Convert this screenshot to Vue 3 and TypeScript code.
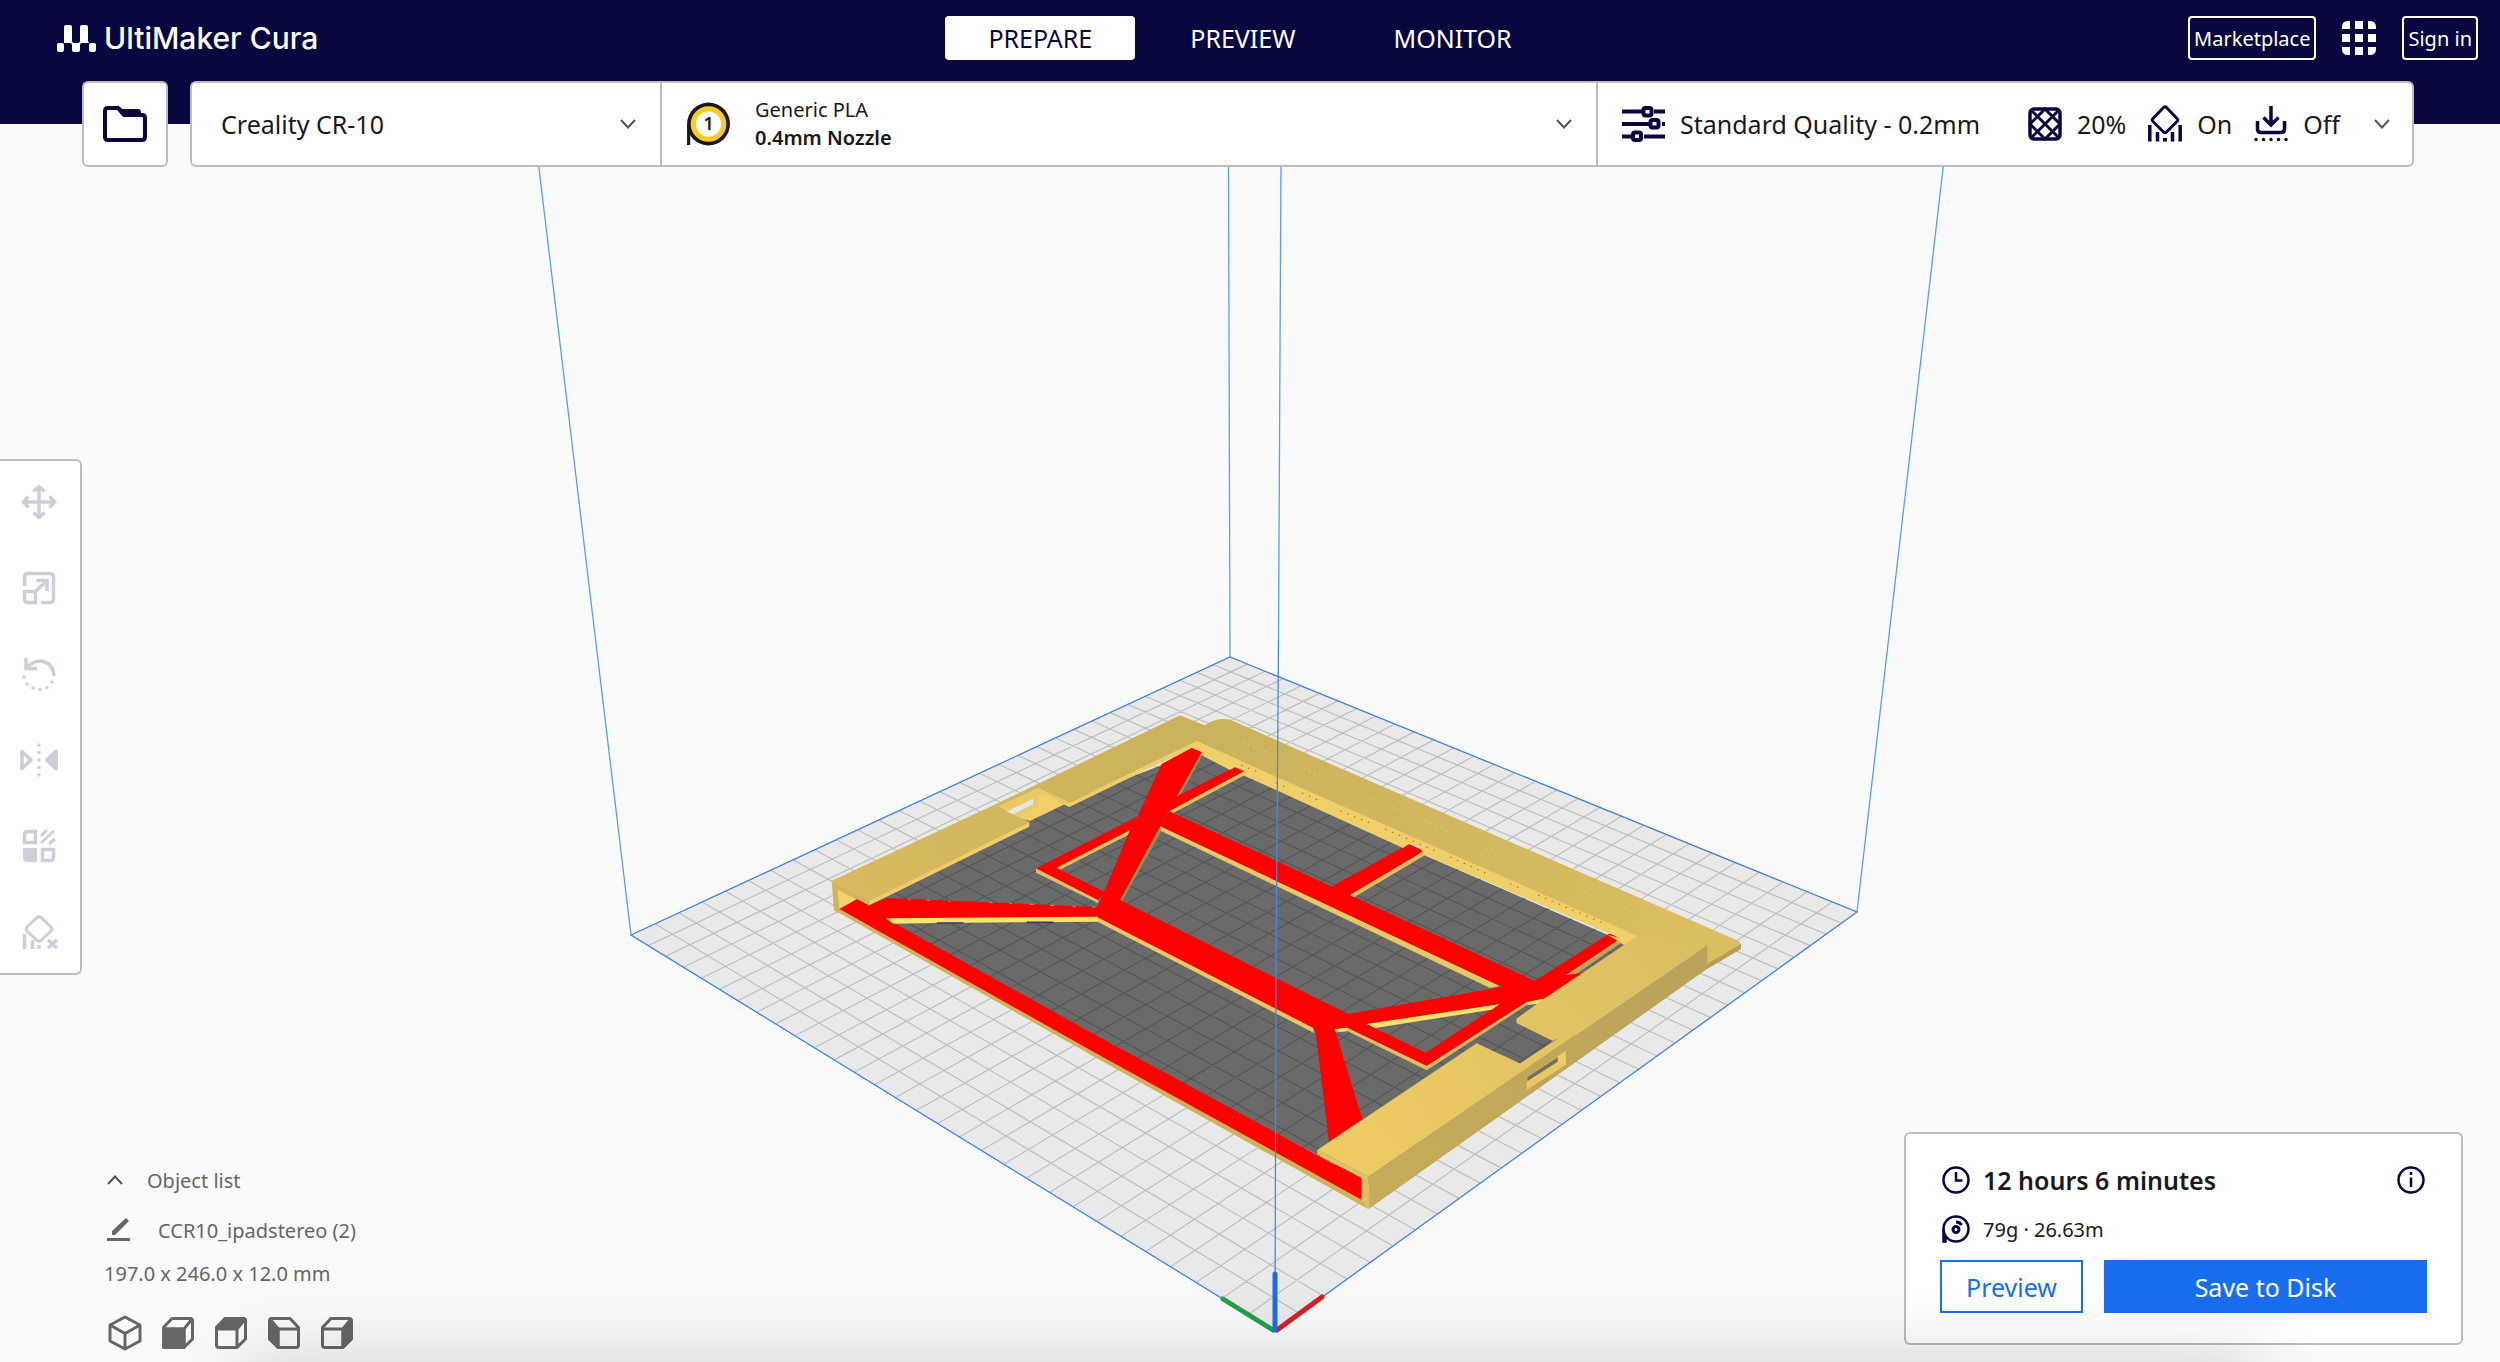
<script setup lang="ts">
type Point = [number, number]

const stages = ['PREPARE', 'PREVIEW', 'MONITOR']
const views = ['3D View', 'Front View', 'Top View', 'Left View', 'Right View']

// Corners of the build plate on the canvas: front, right, back, left.
const front: Point = [1275, 1331]
const right: Point = [1857, 912]
const back: Point = [1230, 657]
const left: Point = [631, 935]

// Perspective mapping from plate coordinates (0..1) to the canvas.
const dx1 = right[0] - back[0]
const dx2 = left[0] - back[0]
const dx3 = front[0] - right[0] + back[0] - left[0]
const dy1 = right[1] - back[1]
const dy2 = left[1] - back[1]
const dy3 = front[1] - right[1] + back[1] - left[1]
const det = dx1 * dy2 - dx2 * dy1
const g = (dx3 * dy2 - dx2 * dy3) / det
const h = (dx1 * dy3 - dx3 * dy1) / det

function project(u: number, v: number): string {
  const w = g * u + h * v + 1
  const x = ((right[0] - front[0] + g * right[0]) * u + (left[0] - front[0] + h * left[0]) * v + front[0]) / w
  const y = ((right[1] - front[1] + g * right[1]) * u + (left[1] - front[1] + h * left[1]) * v + front[1]) / w
  return `${x.toFixed(1)} ${y.toFixed(1)}`
}

function gridPath(count: number): string {
  let d = ''
  for (let i = 1; i < count; i++) {
    const t = i / count
    d += `M${project(t, 0)}L${project(t, 1)}M${project(0, t)}L${project(1, t)}`
  }
  return d
}

const grid = gridPath(30)
const plate = `M${front}L${right}L${back}L${left}Z`
</script>

<template>
  <div class="app">
    <svg class="scene" viewBox="0 0 2500 1362" preserveAspectRatio="xMidYMid slice" aria-hidden="true">
      <defs>
        <linearGradient id="backTop" x1="1180" y1="740" x2="1710" y2="960" gradientUnits="userSpaceOnUse">
          <stop offset="0" stop-color="#cbb15c" /><stop offset="1" stop-color="#dcbe62" />
        </linearGradient>
        <linearGradient id="rightTop" x1="1680" y1="930" x2="1360" y2="1170" gradientUnits="userSpaceOnUse">
          <stop offset="0" stop-color="#dcbe62" /><stop offset="1" stop-color="#edcb64" />
        </linearGradient>
        <linearGradient id="leftTop" x1="1180" y1="720" x2="850" y2="890" gradientUnits="userSpaceOnUse">
          <stop offset="0" stop-color="#cbb15c" /><stop offset="1" stop-color="#d9ba60" />
        </linearGradient>
        <linearGradient id="rightSide" x1="1707" y1="950" x2="1368" y2="1200" gradientUnits="userSpaceOnUse">
          <stop offset="0" stop-color="#b9a359" /><stop offset="1" stop-color="#c6ab5b" />
        </linearGradient>
        <clipPath id="opening">
          <path d="M840 905L1028 815L1063 803L1201 750L1243 775L1320 808L1424 855L1608 935L1630 945L1560 1060L1370 1185L1350 1172Z" />
        </clipPath>
      </defs>
      <path :d="plate" fill="#e9e9e9" />
      <path :d="grid" fill="none" stroke="#bfbfbf" stroke-width="1.2" />
      <path :d="plate" fill="none" stroke="#3f80e2" stroke-width="1.3" />
      <path d="M538 160L631 935M1944 160L1857 912M1228.500 160L1230 657" fill="none" stroke="#5b9bfa" stroke-width="1.3" />

      <g clip-path="url(#opening)">
        <rect x="820" y="700" width="900" height="520" fill="#6a6a6a" />
        <path :d="grid" fill="none" stroke="#575757" stroke-width="1.3" />
      </g>

      <!-- Front rail -->
      <path d="M834 910L840 905L1100 1050L1362 1195L1368 1209L1100 1060Z" fill="#cfb15c" />
      <g transform="translate(800 640) scale(.33333)">
        <path d="M95 722L205 783V797L118 806L270 840L250 870L102 812Z" fill="#d2b45d" />
        <path d="M112 748L205 797L165 782L118 805Z" fill="#f2d168" />
      </g>
      <path d="M839.500 909L857 899L868 905L887 898L1098 907L1098 917L887 919L1100 1037.500L1332 1163L1362 1177V1200L1100 1055.500Z" fill="#f00" />
      <g transform="translate(800 640) scale(.33333)">
        <path d="M258 835L895 830V845L410 849L280 851Z" fill="#fde36a" />
        <path d="M410 849H490M680 847H760" stroke="#323a78" stroke-width="5" />
        <path d="M325 779H331M380 781H390M445 784H452M568 788H578M628 791H636M688 793H702M750 796H764M818 799H828M876 801H886" stroke="#b09a58" stroke-width="3" />
        <!-- Left triangle and cross strut -->
        <path d="M708 685L895 780V790L708 698Z" fill="#dfbf62" />
        <path d="M768 683L990 570L985 584L778 690Z" fill="#e6c564" />
        <path d="M1205 337V350L1140 468L1130 470ZM1082 558L1088 568L968 780L960 780Z" fill="#9a8a4e" />
        <path d="M1108 512L1333 393V406L1118 520Z" fill="#e6c564" />
      </g>
      <!-- Long beams: lower faces, then tops -->
      <path d="M1098 917L1313 1027.500L1314 1033L1098 922ZM1160 826L1320 901.500L1500 986L1490 988L1320 907L1161 831Z" fill="#e8c765" />
      <path d="M1112 895L1120 900L1320 1000L1348.500 1014L1340 1030L1313.500 1028L1098 917.500V907L1104 892ZM1170 811.500L1331.500 886.500L1409 844L1424 851L1350 895L1535 981L1520 1000L1500 986L1320 901.500L1160 826Z" fill="#f00" />
      <path d="M1191.700 747.700L1201.700 752L1176.500 796.500L1235 767L1244.500 771L1169.500 811L1160 826L1120 900L1098 917L1096.700 907.700L1104 891.700L1130 830L1137.500 816.500L1161.700 764Z" fill="#f00" />
      <path d="M1137.500 816.500L1036 868.300L1098 900L1104 891.700L1056.500 867.700L1130 830Z" fill="#f00" />

      <g transform="translate(1300 700) scale(.33333)">
        <path d="M150 585L372 453V467L162 592Z" fill="#dfbf62" />
        <path d="M797 825L962 715V730L825 825Z" fill="#bda459" />
        <path d="M143 983L380 1097L678 907L682 914L380 1111L143 994Z" fill="#dcbd61" />
        <path d="M105 988L143 982V994L107 997ZM678 904L740 893L715 912L682 914Z" fill="#fde36a" />
        <path fill-rule="evenodd" d="M145 942L600 862L705 842L930 700L962 715L797 825L850 818L735 895L678 907L380 1097L143 983L45 985L40 940ZM200 972L377 1058L598 913Z" fill="#f00" />
        <path d="M200 972L598 913L575 929L225 984Z" fill="#fde36a" />
        <path d="M45 980L103 985L187 1257L87 1325Z" fill="#f00" />
      </g>

      <!-- Back band with its inner wall -->
      <path d="M1196.700 741L1300 787L1638.500 935.500L1624 945L1608 935L1620 938L1608 933L1424 855L1420 847L1409 844L1403 848L1300 801L1243 775L1244 771L1235 767L1230 770L1201 755L1201.700 752L1191.700 747.700L1161 763L1159 762Z" fill="#efcf68" />
      <path d="M1190 744L1205 725.500Q1213 719 1223 719Q1230 719 1240 724L1300 750.700L1733 938.500Q1742 942 1741 946L1707 967L1640 937L1300 787.500L1196.700 741Z" fill="url(#backTop)" />
      <path d="M1741 944V949L1707 969V964Z" fill="#b49e57" />
      <path d="M1241 765L1260 773M1276 783L1285 787M1302 793L1320 801M1340 811L1370 823M1385 829L1440 853M1450 857L1490 875M1510 884L1520 888M1538 895L1605 924" stroke="#ed5a20" stroke-width="1.2" stroke-dasharray="1.500 6" />
      <path d="M1242 742L1268 753M1303 768L1325 778M1361 794L1374 799M1386 804L1412 815M1424 820L1455 834M1486 848L1500 854M1530 867L1546 874M1585 892L1638 914M1665 926L1690 937" stroke="#e6cc74" stroke-width="1" stroke-dasharray="2 4" />

      <!-- Left rail -->
      <g transform="translate(800 640) scale(.33333)">
        <path d="M575 500L715 438L820 490L790 494L690 542L600 525Z" fill="#e9c964" />
        <path d="M715 468V500L655 530L690 542L790 494L740 462Z" fill="#f0cf68" />
        <path d="M620 515L695 478H700V492L640 523Z" fill="#e6e6e6" />
        <path d="M205 783L688 545V560L205 797ZM808 488L1190 303L1184 319L808 501L785 490Z" fill="#efcd68" />
      </g>
      <path d="M831.700 880.700L994 805L1038 787.500L998.500 806L1007.500 812L1029.500 822L868.500 901.500Z" fill="url(#leftTop)" />
      <path d="M992 806L1180 715.300L1205 725.500L1208 733L1196.700 741L1069.500 802.700L1038.500 787.700L998.500 806Z" fill="url(#leftTop)" />

      <!-- Right frame -->
      <path d="M1707.300 945V968.700L1368.300 1209.300V1176.700Z" fill="url(#rightSide)" />
      <path d="M1361.500 1175L1368.500 1176.500V1209L1361.500 1200Z" fill="#dfbf62" />
      <path d="M1317.300 1150V1154.500L1361.500 1178L1368.500 1177ZM1516.500 1018V1023L1553 1041L1558 1038Z" fill="#e3c263" />
      <path d="M1638.300 935.300L1700 938L1707.300 945L1368.300 1176.700L1317.300 1150L1476.700 1043.300L1520 1063.500L1557 1039L1516.700 1018.500L1545.700 997.700Z" fill="url(#rightTop)" />
      <g transform="translate(1300 700) scale(.33333)">
        <path d="M680 1133L797 1053V1095L680 1170Z" fill="#e8c764" />
        <path d="M775 1068L797 1053V1095L775 1085Z" fill="#f0cf68" />
        <path d="M682 1132L773 1072V1085L682 1144Z" fill="#74705f" />
      </g>

      <path d="M1281 160L1278.500 640" fill="none" stroke="#5b9bfa" stroke-width="1.3" />
      <path d="M1278.500 640L1276 970L1275 1331" fill="none" stroke="#4a85e8" stroke-width="1.3" />
      <g fill="none" stroke-width="5" stroke-linecap="round">
        <path d="M1223 1299L1273 1330" stroke="#23a047" />
        <path d="M1322 1297L1277 1330" stroke="#d91e2a" />
        <path d="M1275 1274V1330" stroke="#196ef0" />
      </g>
    </svg>

    <header class="top">
      <a class="brand" href="#">
        <svg class="brand-mark" viewBox="0 0 39 27" fill="#fff" aria-hidden="true">
          <rect y="18" width="7" height="9" rx="2" /><rect x="32" y="18" width="7" height="9" rx="2" />
          <path d="M7 2Q7 0 9 0H13Q15 0 15 2V16Q15 18 17 18H21Q23 18 23 16V2Q23 0 25 0H29Q31 0 31 2V16L32 18H25Q23 18 23 20V25Q23 27 21 27H17Q15 27 15 25V20Q15 18 13 18H7Z" />
        </svg>
        <span>UltiMaker Cura</span>
      </a>
      <nav class="stages">
        <button v-for="(stage, i) in stages" :key="stage" type="button" :class="['stage', { active: i === 0 }]">{{ stage }}</button>
      </nav>
      <div class="account">
        <button type="button" class="outlined">Marketplace</button>
        <button type="button" class="apps" aria-label="Applications">
          <svg viewBox="0 0 34 34" fill="#fff">
            <path d="M0 8V6Q0 0 6 0H8V8ZM13 0H21V8H13ZM26 0H28Q34 0 34 6V8H26ZM0 13H8V21H0ZM13 13H21V21H13ZM26 13H34V21H26ZM0 26H8V34H6Q0 34 0 28ZM13 26H21V34H13ZM26 26H34V28Q34 34 28 34H26Z" />
          </svg>
        </button>
        <button type="button" class="outlined">Sign in</button>
      </div>
    </header>

    <div class="config">
      <button type="button" class="open" aria-label="Open file">
        <svg viewBox="0 0 44 36" fill="none" stroke="#08073f" stroke-width="4">
          <path d="M2 32V5Q2 2 5 2H15L21 9H39Q42 9 42 12V31Q42 34 39 34H5Q2 34 2 31Z" />
          <path d="M14 1H17L19 3H35Q38 3 38 6V10H21Z" fill="#08073f" stroke="none" />
        </svg>
      </button>
      <div class="bar">
        <button type="button" class="cell machine">
          <span class="grow">Creality CR-10</span>
          <svg class="chevron" viewBox="0 0 16 10"><path d="M1 1L8 8.500L15 1" /></svg>
        </button>
        <button type="button" class="cell material">
          <svg class="spool" viewBox="0 0 42 42">
            <circle cx="21.500" cy="21" r="20.500" fill="#191919" /><path d="M1 20V41H4V30" fill="#191919" />
            <circle cx="21.500" cy="21" r="14.500" fill="#fff" stroke="#ffc924" stroke-width="5" />
            <text x="21.500" y="27" text-anchor="middle" font-size="17" font-weight="600" fill="#191919">1</text>
          </svg>
          <span class="grow lines"><span>Generic PLA</span><b>0.4mm Nozzle</b></span>
          <svg class="chevron" viewBox="0 0 16 10"><path d="M1 1L8 8.500L15 1" /></svg>
        </button>
        <button type="button" class="cell settings">
          <svg class="sliders" viewBox="0 0 43 36" fill="none" stroke="#08073f" stroke-width="4">
            <path d="M0 5.500H21M32 5.500H43M0 18H28M40 18H43M0 30.500H11M22 30.500H43" />
            <rect x="21.500" y="2" width="8" height="7.500" rx="2" /><rect x="28.500" y="14" width="8" height="7.500" rx="2" /><rect x="11" y="26.500" width="8" height="7.500" rx="2" />
          </svg>
          <span class="grow">Standard Quality - 0.2mm</span>
          <svg class="small" viewBox="0 0 34 34" fill="none" stroke="#08073f" stroke-width="3">
            <rect x="2" y="2" width="30" height="30" rx="4" stroke-width="3.500" />
            <path d="M3 3L31 31M31 3L3 31M17 2L2 17L17 32L32 17Z" />
          </svg>
          <span class="value">20%</span>
          <svg class="small" viewBox="0 0 34 34" fill="none" stroke="#08073f">
            <path d="M15.500 0.500Q17 -1 18.500 0.500L29 11.500Q30.500 13 29 14.500L18.500 25Q17 26.500 15.500 25L5 14.500Q3.500 13 5 11.500Z" stroke-width="3" />
            <path d="M1.800 18V34.500M9.500 25V34.500M24.500 25V34.500M32.200 18V34.500" stroke-width="3.500" /><path d="M17 31V34.500" stroke-width="4" />
          </svg>
          <span class="value">On</span>
          <svg class="small" viewBox="0 0 34 34" fill="none" stroke="#08073f" stroke-width="3.500">
            <path d="M17 -1V17M9.500 10.500L17 18L24.500 10.500M3.500 14V22Q3.500 25.500 7 25.500H27Q30.500 25.500 30.500 22V14" />
            <path d="M2 32.500H32.500" stroke-linecap="round" stroke-dasharray="0 7.500" />
          </svg>
          <span class="value">Off</span>
          <svg class="chevron" viewBox="0 0 16 10"><path d="M1 1L8 8.500L15 1" /></svg>
        </button>
      </div>
    </div>

    <aside class="tools">
      <button type="button" aria-label="Move">
        <svg viewBox="0 0 36 36" fill="none" stroke="#d0cddb" stroke-width="3.500"><path d="M18 3V33M3 18H33M12.500 7.500L18 2.500L23.500 7.500M12.500 28.500L18 33.500L23.500 28.500M7.500 12.500L2.500 18L7.500 23.500M28.500 12.500L33.500 18L28.500 23.500" /></svg>
      </button>
      <button type="button" aria-label="Scale">
        <svg viewBox="0 0 36 36" fill="none" stroke="#d0cddb" stroke-width="3.500"><path d="M3.500 16V7Q3.500 3.500 7 3.500H29Q32.500 3.500 32.500 7V29Q32.500 32.500 29 32.500H20M3.500 21.500H14.500V32.500H7Q3.500 32.500 3.500 29ZM14.500 21.500L26 10.500M15.500 10.500H26V21" /></svg>
      </button>
      <button type="button" aria-label="Rotate">
        <svg viewBox="0 0 36 36" fill="none" stroke="#d0cddb" stroke-width="3.500"><path d="M5 2V12.500H16M5 12Q12 5 19 5Q32 6 33 20" /><path d="M3 21H3.010M6 28H6.010M12 32H12.010M19 33.500H19.010M26 31.500H26.010M31 26H31.010" stroke-linecap="round" /></svg>
      </button>
      <button type="button" aria-label="Mirror">
        <svg viewBox="0 0 36 36" fill="none" stroke="#d0cddb" stroke-width="3.500" stroke-linejoin="round"><path d="M1 9.500V26.500L10 18ZM35 9.500V26.500L26 18Z" /><path d="M35 9.500V26.500L26 18Z" fill="#d0cddb" /><path d="M18 3V3.010M18 10.500V10.510M18 18V18.010M18 25.500V25.510M18 33V33.010" stroke-linecap="round" /></svg>
      </button>
      <button type="button" aria-label="Per model settings">
        <svg viewBox="0 0 36 36" fill="none" stroke="#d0cddb" stroke-width="3.500"><path d="M3.500 14.500V7Q3.500 3.500 7 3.500H14.500V14.500ZM21.500 21.500H32.500V29Q32.500 32.500 29 32.500H21.500Z" /><path d="M2 20H16V34H7Q2 34 2 29Z" fill="#d0cddb" stroke="none" /><path d="M20 8L26 2M20 15L33 3M28 16L34 11" stroke-width="3" /></svg>
      </button>
      <button type="button" aria-label="Support blocker">
        <svg viewBox="0 0 36 36" fill="none" stroke="#d0cddb" stroke-width="3"><path d="M16 3.500Q18 2 20 3.500L30 13Q32 15 30 17L20 26.500Q18 28 16 26.500L6 17Q4.500 15 6 13Z" /><path d="M3.500 20V35M11.500 26V35M18 31V35M27 26L36 34M36 26L27 34" stroke-width="3.500" /></svg>
      </button>
    </aside>

    <footer class="bottom">
      <section class="objects">
        <button type="button" class="row toggle">
          <svg class="chevron" viewBox="0 0 16 10"><path d="M1 9L8 1.500L15 9" /></svg>
          <span>Object list</span>
        </button>
        <button type="button" class="row name">
          <svg class="pencil" viewBox="0 0 24 24" fill="#666"><path d="M0 20H23V23H0ZM5 17V13L19 0L22 3L8 17Z" /></svg>
          <span>CCR10_ipadstereo (2)</span>
        </button>
        <p class="size">197.0 x 246.0 x 12.0 mm</p>
        <div class="views">
          <button v-for="(view, i) in views" :key="view" type="button" :aria-label="view">
            <svg viewBox="0 0 36 36" fill="none" stroke="#666" stroke-width="3" stroke-linejoin="round">
              <path v-if="i === 0" d="M18 2L33 10V26L18 34L3 26V10ZM3 10L18 18.500L33 10M18 18.500V34" />
              <g v-else :transform="i === 3 ? 'matrix(-1 0 0 1 36 0)' : undefined">
                <path d="M3.500 12.500L12 3.500H30Q32.500 3.500 32.500 6V24L24 32.500H6Q3.500 32.500 3.500 30ZM3.500 14H24M24 14V32.500M24 14L32 4" />
                <path v-if="i === 1" d="M3.500 14H24V32.500H3.500Z" fill="#666" />
                <path v-if="i === 2" d="M3.500 13L12 4H32L24 13Z" fill="#666" />
                <path v-if="i > 2" d="M24 14L32 5V24L24 32Z" fill="#666" />
              </g>
            </svg>
          </button>
        </div>
      </section>

      <section class="job">
        <div class="line time">
          <svg class="glyph" viewBox="0 0 28 28" fill="none" stroke="#08073f" stroke-width="2.500"><circle cx="14" cy="14" r="12.500" /><path d="M14 6V14.500H20.500" /></svg>
          <strong>12 hours 6 minutes</strong>
          <button type="button" class="info" aria-label="Print details">
            <svg class="glyph" viewBox="0 0 28 28" fill="none" stroke="#08073f" stroke-width="2.500"><circle cx="14" cy="14" r="12.500" /><path d="M14 11.500V21M14 6V9" /></svg>
          </button>
        </div>
        <div class="line usage">
          <svg class="glyph" viewBox="0 0 28 28" fill="none" stroke="#08073f" stroke-width="2.500"><circle cx="14" cy="14" r="12.500" /><path d="M1.500 14V26.500H3.500V21" /><circle cx="14" cy="14.500" r="3" stroke-width="3" /><path d="M14 7Q18 7 19.500 10" stroke-width="3" /></svg>
          <span>79g · 26.63m</span>
        </div>
        <div class="actions">
          <button type="button" class="preview">Preview</button>
          <button type="button" class="save">Save to Disk</button>
        </div>
      </section>
    </footer>
    <div class="dock-shade"></div>
  </div>
</template>

<style>
body {
  margin: 0;
  background: #fafafa;
}
</style>

<style scoped>
.app {
  position: relative;
  display: flex;
  flex-direction: column;
  min-height: 100vh;
  overflow: hidden;
  box-sizing: border-box;
  background: #fafafa;
  color: #191919;
  font-family: "Noto Sans", sans-serif;
  font-size: 25px;
}
.app * {
  box-sizing: border-box;
}
button {
  margin: 0;
  padding: 0;
  border: 0;
  background: none;
  color: inherit;
  font: inherit;
  cursor: pointer;
}
svg {
  display: block;
  flex: none;
}
.scene {
  position: absolute;
  inset: 0;
  width: 100%;
  height: 100%;
}
.top {
  position: relative;
  display: grid;
  grid-template-columns: 1fr auto 1fr;
  align-items: start;
  height: 124px;
  padding: 16px 22px 0;
  background: #08073f;
  color: #fff;
}
.brand {
  display: flex;
  align-items: center;
  gap: 8px;
  height: 44px;
  padding-left: 35px;
  color: #fff;
  font-family: Inter, sans-serif;
  font-size: 30px;
  font-weight: 500;
  text-decoration: none;
}
.brand-mark {
  width: 39px;
  height: 27px;
}
.stages {
  display: flex;
  gap: 12px;
}
.stage {
  height: 44px;
  padding: 0 43px;
  border-radius: 4px;
}
.stage.active {
  background: #fff;
  color: #08073f;
}
.account {
  display: flex;
  justify-content: flex-end;
  align-items: center;
  gap: 26px;
  font-size: 20px;
}
.outlined {
  height: 44px;
  padding: 0 4px;
  border: 2px solid #fff;
  border-radius: 4px;
}
.apps svg {
  width: 34px;
  height: 34px;
}
.config {
  position: relative;
  display: flex;
  gap: 22px;
  height: 86px;
  margin: -43px 86px 0 82px;
}
.open {
  display: flex;
  align-items: center;
  justify-content: center;
  width: 86px;
  border: 2px solid #bcbcbc;
  border-radius: 6px;
  background: #fff;
}
.open svg {
  width: 44px;
  height: 36px;
}
.bar {
  display: grid;
  grid-template-columns: 1fr 2fr 816px;
  flex: 1;
  border: 2px solid #bcbcbc;
  border-radius: 6px;
  background: #fff;
}
.cell {
  display: flex;
  align-items: center;
  text-align: left;
}
.cell + .cell {
  border-left: 2px solid #bcbcbc;
}
.grow {
  flex: 1;
}
.machine {
  padding: 0 24px 0 29px;
}
.material {
  padding: 0 24px;
}
.settings {
  padding: 0 22px 0 24px;
}
.chevron {
  width: 16px;
  height: 10px;
  fill: none;
  stroke: #555;
  stroke-width: 2;
}
.spool {
  width: 44px;
  height: 44px;
  margin-right: 25px;
}
.lines {
  display: flex;
  flex-direction: column;
  font-size: 20px;
  line-height: 28px;
}
.lines b {
  font-weight: 600;
}
.sliders {
  width: 43px;
  height: 36px;
  margin-right: 15px;
}
.small {
  width: 34px;
  height: 34px;
  overflow: visible;
}
.value {
  margin: 0 22px 0 15px;
}
.value + .chevron {
  margin-left: 12px;
}
.tools {
  position: relative;
  display: flex;
  flex-direction: column;
  align-self: flex-start;
  gap: 4px;
  width: 82px;
  margin-top: 292px;
  border: 2px solid #bcbcbc;
  border-left: 0;
  border-radius: 0 6px 6px 0;
  background: #fff;
}
.tools button {
  display: flex;
  align-items: center;
  justify-content: center;
  width: 78px;
  height: 82px;
}
.tools svg {
  width: 36px;
  height: 36px;
  overflow: visible;
}
.bottom {
  position: relative;
  display: flex;
  align-items: flex-end;
  justify-content: space-between;
  margin-top: auto;
  padding: 0 37px 0 104px;
}
.objects {
  padding-bottom: 11px;
  color: #666;
  font-size: 20px;
}
.row {
  display: flex;
  align-items: center;
  height: 50px;
}
.toggle {
  gap: 24px;
  padding-left: 3px;
}
.name {
  gap: 27px;
  padding-left: 3px;
}
.pencil {
  width: 24px;
  height: 24px;
}
.size {
  margin: 0;
  line-height: 38px;
}
.views {
  display: flex;
  gap: 17px;
  margin: 22px 0 0 3px;
}
.views svg {
  width: 36px;
  height: 36px;
}
.job {
  width: 559px;
  margin-bottom: 17px;
  padding: 27px 34px 30px;
  border: 2px solid #bcbcbc;
  border-radius: 6px;
  background: #fff;
}
.line {
  display: flex;
  align-items: center;
  gap: 13px;
  padding: 0 2px;
}
.time {
  height: 38px;
}
.time strong {
  flex: 1;
  font-weight: 600;
}
.usage {
  height: 60px;
  font-size: 20px;
}
.glyph {
  width: 28px;
  height: 28px;
}
.actions {
  display: flex;
  gap: 21px;
  margin-top: 1px;
}
.actions button {
  height: 53px;
  border: 2px solid #196ef0;
}
.preview {
  width: 143px;
  color: #196ef0;
}
.save {
  flex: 1;
  background: #196ef0;
  color: #fff;
}
.dock-shade {
  position: absolute;
  right: 240px;
  bottom: -60px;
  left: 240px;
  height: 60px;
  border-radius: 30px;
  box-shadow: 0 0 70px 10px rgba(0, 0, 0, 0.14);
  pointer-events: none;
}
</style>
